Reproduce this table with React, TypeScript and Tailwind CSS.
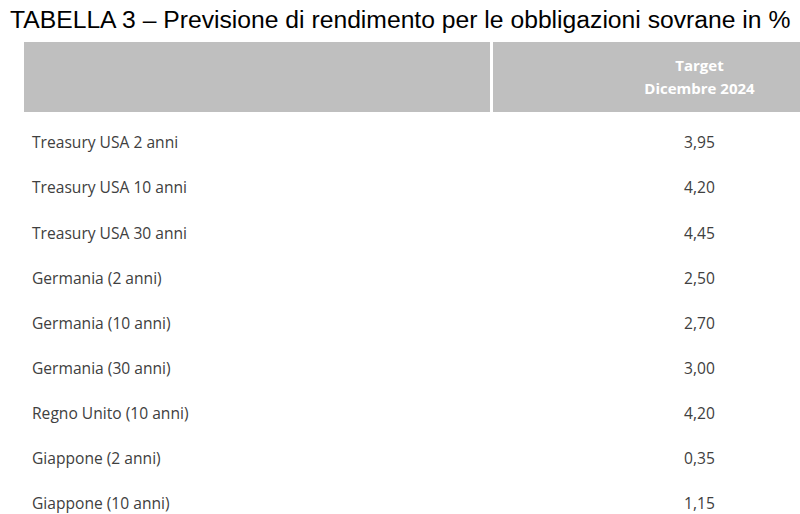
import React from "react";

const rows: [string, string][] = [
  ["Treasury USA 2 anni", "3,95"],
  ["Treasury USA 10 anni", "4,20"],
  ["Treasury USA 30 anni", "4,45"],
  ["Germania (2 anni)", "2,50"],
  ["Germania (10 anni)", "2,70"],
  ["Germania (30 anni)", "3,00"],
  ["Regno Unito (10 anni)", "4,20"],
  ["Giappone (2 anni)", "0,35"],
  ["Giappone (10 anni)", "1,15"],
];

export default function App() {
  return (
    <div className="w-[800px] h-[514px] overflow-hidden bg-white">
      <div className="pl-[10px] pt-[5px] h-[42px] text-[24.7px] leading-[30px] text-black font-['Liberation_Sans',Arial,sans-serif] whitespace-nowrap">
        TABELLA 3 – Previsione di rendimento per le obbligazioni sovrane in %
      </div>
      <div className="pl-[24px] font-['Open_Sans',sans-serif]">
        <div className="flex h-[70px] gap-[3px]">
          <div className="w-[466px] bg-[#bfbfbf]" />
          <div className="flex-1 bg-[#bfbfbf] flex flex-col items-center justify-center text-white font-bold text-[15px] leading-[23px] pl-[106px]">
            <div>Target</div>
            <div>Dicembre 2024</div>
          </div>
        </div>
        <div className="pt-[8.5px]">
          {rows.map(([name, val]) => (
            <div key={name} className="flex h-[45.1px] items-center text-[15.6px] text-[#404040]">
              <div className="w-[469px] pl-[8px]">{name}</div>
              <div className="flex-1 text-center pl-[106px]">{val}</div>
            </div>
          ))}
        </div>
      </div>
    </div>
  );
}
